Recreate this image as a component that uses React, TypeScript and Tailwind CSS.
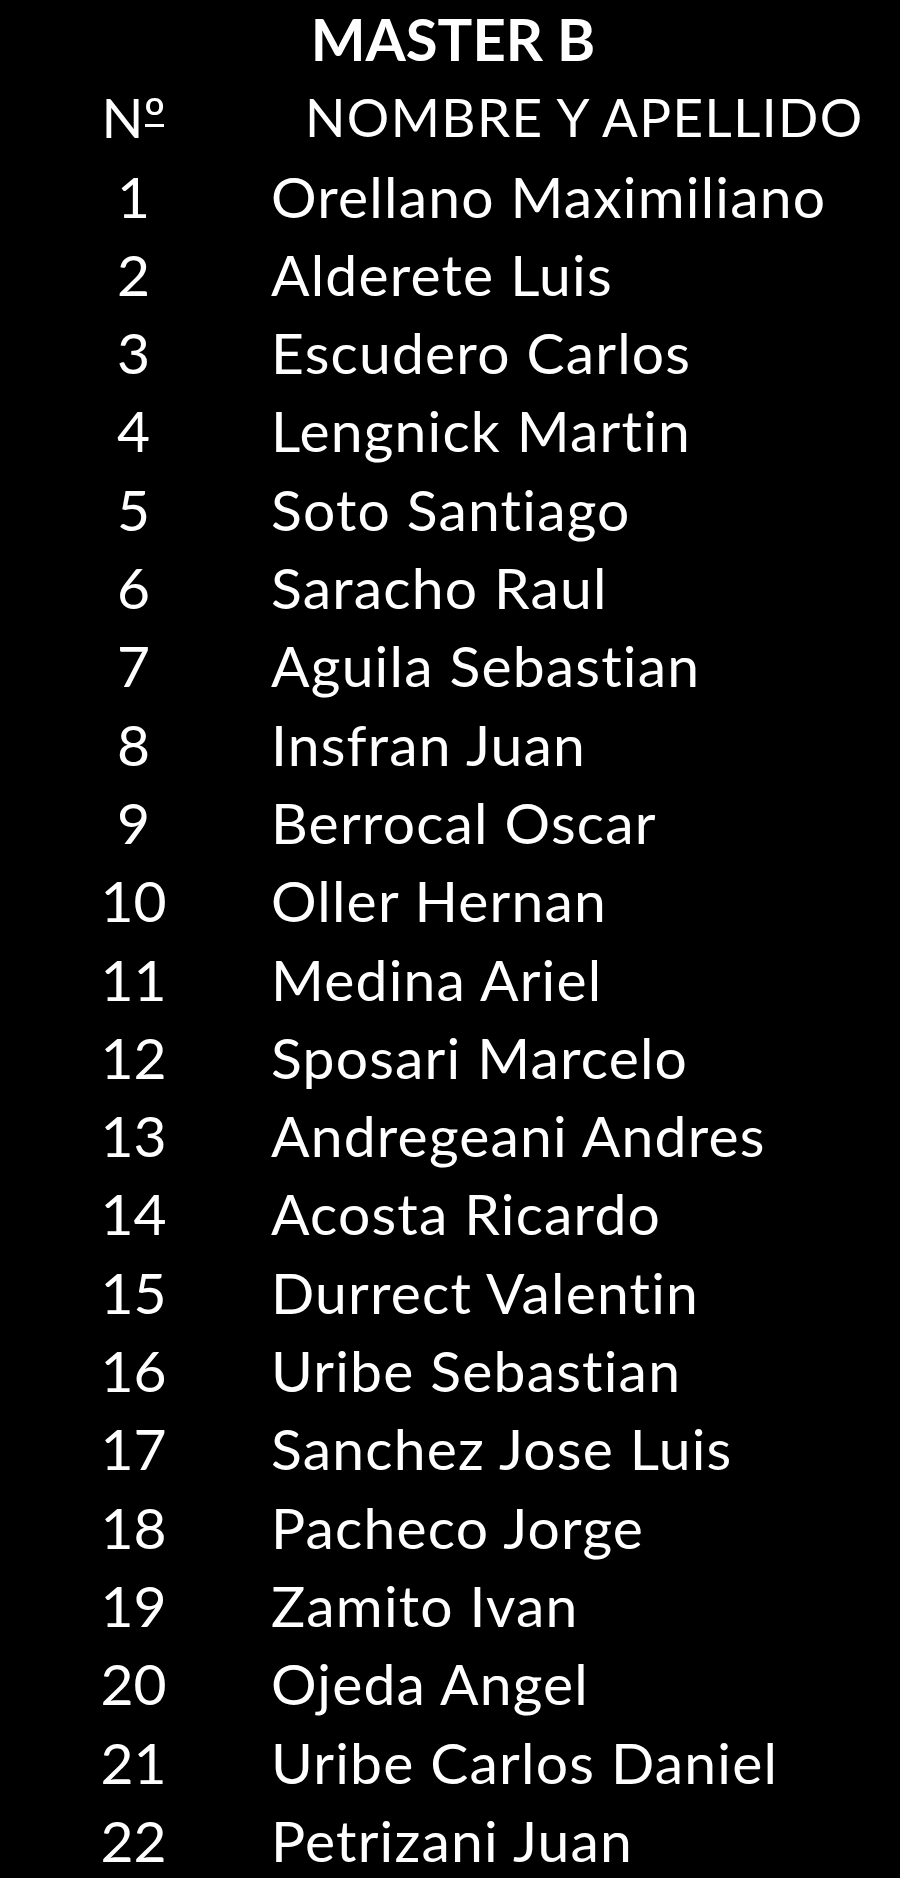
const players = [
  "Orellano Maximiliano",
  "Alderete Luis",
  "Escudero Carlos",
  "Lengnick Martin",
  "Soto Santiago",
  "Saracho Raul",
  "Aguila Sebastian",
  "Insfran Juan",
  "Berrocal Oscar",
  "Oller Hernan",
  "Medina Ariel",
  "Sposari Marcelo",
  "Andregeani Andres",
  "Acosta Ricardo",
  "Durrect Valentin",
  "Uribe Sebastian",
  "Sanchez Jose Luis",
  "Pacheco Jorge",
  "Zamito Ivan",
  "Ojeda Angel",
  "Uribe Carlos Daniel",
  "Petrizani Juan",
];

export default function App() {
  return (
    <div className="min-h-[1878px] w-[900px] overflow-hidden bg-black text-white font-['Lato','Liberation_Sans',sans-serif] [font-variant-ligatures:none]">
      {/* Title */}
      <div className="h-[78.3px] pl-[6px] text-center text-[58px] font-bold leading-[78.3px]">
        MASTER B
      </div>

      {/* Header */}
      <div className="grid h-[78.3px] grid-cols-[271px_1fr] leading-[78.3px]">
        <div className="pr-[4px] text-center text-[55px]">
          N
          <span className="relative inline-block">
            º
            <span className="absolute left-[2px] right-[2px] top-[46px] h-[3px] bg-white" />
          </span>
        </div>
        <div className="pl-[34px] text-[53px] tracking-[1.4px]">NOMBRE Y APELLIDO</div>
      </div>

      {/* Rows */}
      {players.map((name, i) => (
        <div key={name} className="grid h-[78.3px] grid-cols-[271px_1fr] text-[57px] leading-[78.3px]">
          <div className="pr-[4px] text-center">{i + 1}</div>
          <div className="tracking-[1.2px]">{name}</div>
        </div>
      ))}
    </div>
  );
}
